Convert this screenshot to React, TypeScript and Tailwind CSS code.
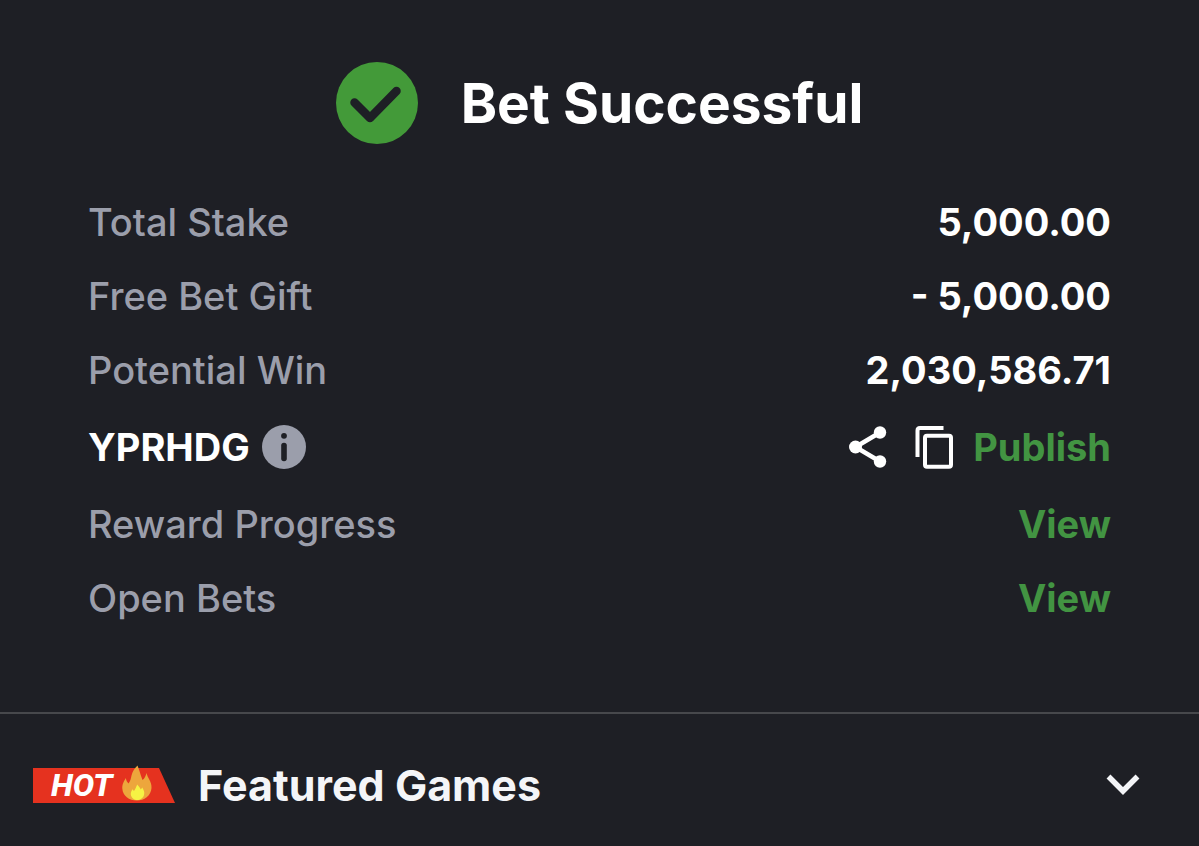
import type { ReactNode } from "react";

const action = "font-bold text-[#429442]";

function Row({ label, children }: { label: string; children: ReactNode }) {
  return (
    <div className="flex h-[74px] items-center justify-between">
      <dt className="font-[450] text-[#9b9eab]">{label}</dt>
      <dd className="font-bold">{children}</dd>
    </div>
  );
}

function CheckBadge() {
  return (
    <svg viewBox="0 0 82 82" className="size-[82px] shrink-0" aria-hidden="true">
      <circle cx="41" cy="41" r="41" fill="#439a39" />
      <path d="M18.500 40.500 34 56 60.500 29" fill="none" stroke="#1e1f25" strokeWidth="8.500" strokeLinecap="round" strokeLinejoin="round" />
    </svg>
  );
}

function InfoIcon() {
  return (
    <svg viewBox="0 0 44 44" className="size-11" aria-hidden="true">
      <circle cx="22" cy="22" r="22" fill="#9b9eab" />
      <circle cx="22" cy="10.800" r="2.900" fill="#1e1f25" />
      <path d="M22 20.500v13" stroke="#1e1f25" strokeWidth="5.600" strokeLinecap="round" />
    </svg>
  );
}

function ShareIcon() {
  return (
    <svg viewBox="0 0 38 42" className="h-[42px] w-[38px]" aria-hidden="true">
      <path d="M31 6.500 6.500 21 31 35.500" fill="none" stroke="#fff" strokeWidth="4.500" />
      <circle cx="31" cy="6.500" r="6.200" fill="#fff" />
      <circle cx="6.500" cy="21" r="6.500" fill="#fff" />
      <circle cx="31" cy="35.500" r="6.200" fill="#fff" />
    </svg>
  );
}

function CopyIcon() {
  return (
    <svg viewBox="0 0 38 43" className="h-[43px] w-[38px]" aria-hidden="true">
      <path d="M2.500 31V4.500Q2.500 2 5 2H28.500" fill="none" stroke="#fff" strokeWidth="4" />
      <rect x="10" y="9.800" width="26" height="31" rx="2" fill="none" stroke="#fff" strokeWidth="4" />
    </svg>
  );
}

function Flame() {
  return (
    <svg viewBox="0 0 30 36" className="h-9 w-[30px]" aria-hidden="true">
      <path
        d="M15.500 0.500C17.300 5 18 8 20.500 15C22.800 13.500 23.500 10.500 24.800 8C25 13 30 16 29.500 23C29 31 22 35.500 15 35.500C7 35.500 0.800 31 0.300 23.500C0 19 2.200 16 3.800 13C4.300 15.500 5 17 6.500 18.500C8.500 16 8.800 13.500 9.500 10.500C10.500 6 13 3 15.500 0.500Z"
        fill="#eda63c"
      />
      <path
        d="M15.300 19.500C16.500 21 17.800 22.500 18.800 24.500L20.300 22.500C21.500 25 23 26.800 22 30C21 33.500 18 35 15.500 35C12 35 9.300 33 8.800 29.500C8.600 27.300 9.800 25.800 10.300 24.300L12 26C13.500 24 14 22 15.300 19.500Z"
        fill="#f6f344"
      />
    </svg>
  );
}

function HotTag() {
  return (
    <span className="relative flex h-[35px] w-[142px] shrink-0 items-center pl-[18px]">
      <svg viewBox="0 0 142 35" className="absolute inset-0 size-full" aria-hidden="true">
        <path d="M0 0H126L142 35H0Z" fill="#e5321f" />
      </svg>
      <span className="relative font-['Roboto',sans-serif] text-[32px] leading-none font-extrabold text-white italic">HOT</span>
      <span className="absolute -top-[3px] left-[89px]">
        <Flame />
      </span>
    </span>
  );
}

export default function App() {
  return (
    <main className="min-h-screen bg-[#1e1f25] font-['Inter',sans-serif] text-white">
      <section className="px-[88px] pt-[62px] pb-[77px]">
        <header className="flex items-center justify-center gap-[43px]">
          <CheckBadge />
          <h1 className="text-[55px] leading-[82px] font-bold">Bet Successful</h1>
        </header>
        <dl className="mt-[41px] text-[38px] leading-[46px]">
          <Row label="Total Stake">5,000.00</Row>
          <Row label="Free Bet Gift">- 5,000.00</Row>
          <Row label="Potential Win">2,030,586.71</Row>
          <div className="flex h-[80px] items-center justify-between">
            <dt className="flex items-center gap-3 font-bold">
              YPRHDG
              <button type="button" aria-label="Booking code information">
                <InfoIcon />
              </button>
            </dt>
            <dd className="flex items-center">
              <button type="button" aria-label="Share" className="mr-7">
                <ShareIcon />
              </button>
              <button type="button" aria-label="Copy code" className="mr-5">
                <CopyIcon />
              </button>
              <button type="button" className={action}>Publish</button>
            </dd>
          </div>
          <Row label="Reward Progress">
            <a href="#reward-progress" className={action}>View</a>
          </Row>
          <Row label="Open Bets">
            <a href="#open-bets" className={action}>View</a>
          </Row>
        </dl>
      </section>
      <section className="border-t-2 border-[#47484c]">
        <button type="button" aria-expanded="false" className="flex h-[132px] w-full items-center pt-[10px] pr-[59px] pl-[33px] text-left text-[#f4f5f8]">
          <HotTag />
          <span className="ml-[23px] flex-1 text-[43px] leading-[52px] font-bold">Featured Games</span>
          <svg viewBox="0 0 34 22" className="h-[22px] w-[34px]" aria-hidden="true">
            <path d="M2.500 2.500 17 17 31.500 2.500" fill="none" stroke="#f4f5f8" strokeWidth="5.500" />
          </svg>
        </button>
      </section>
    </main>
  );
}
